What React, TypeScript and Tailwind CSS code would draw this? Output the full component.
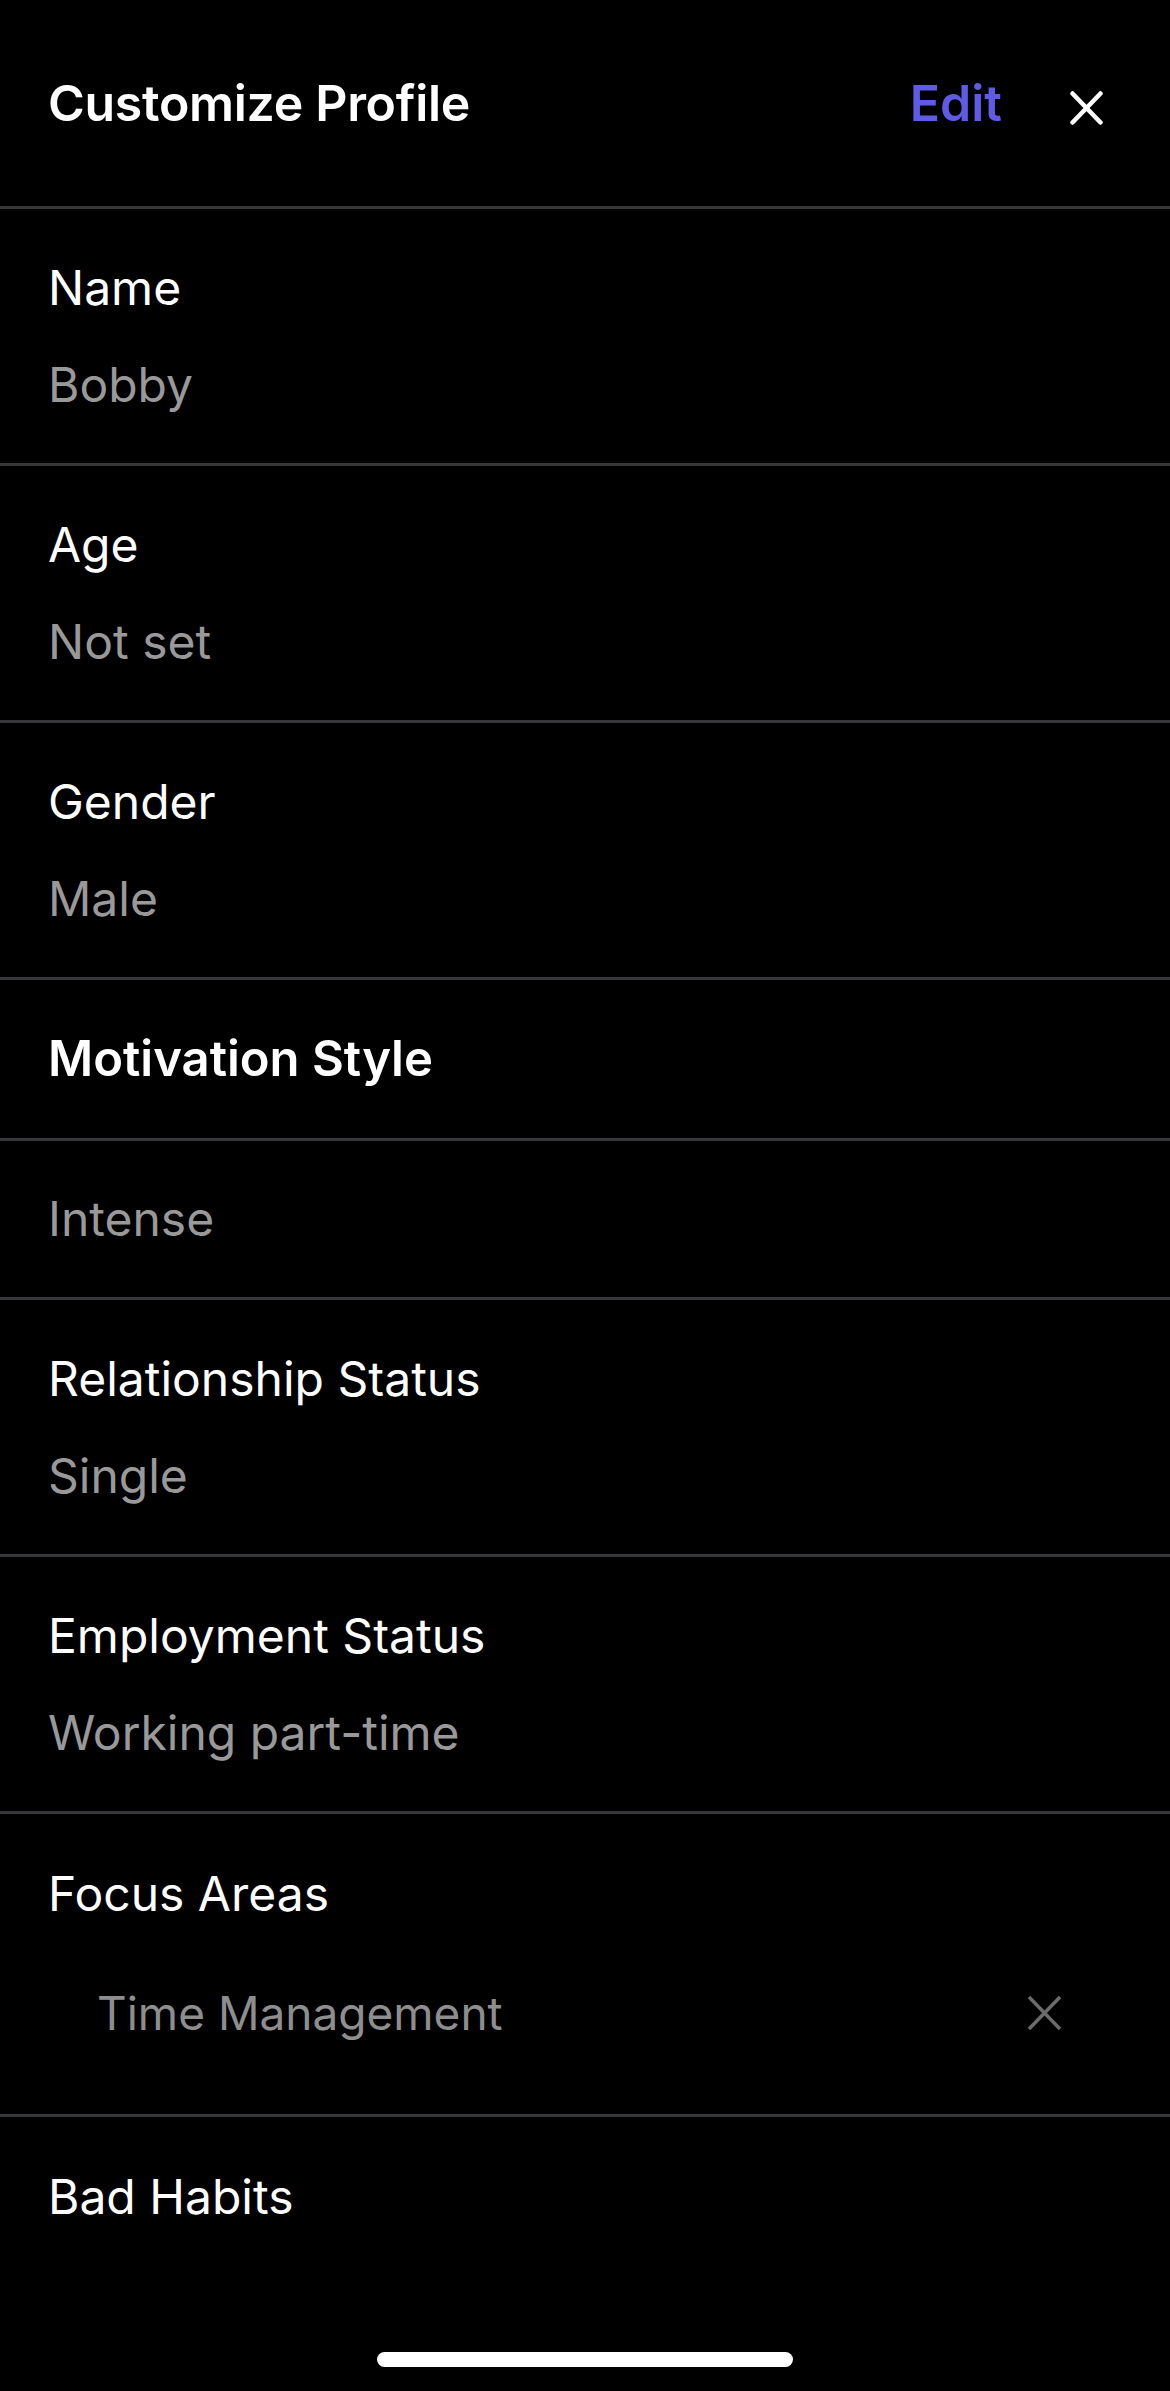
import React from "react";

const font = { fontFamily: "Inter, 'Noto Sans', 'Liberation Sans', sans-serif" };

function Divider() {
  return <div className="h-[3px] w-full bg-[#38383a]" />;
}

function Field({ label, value }: { label: string; value: string }) {
  return (
    <>
      <div className="flex flex-col pl-[48px] pr-[48px] pt-[50px] pb-[49px] gap-[39px]">
        <div className="text-[48px] leading-[58px] text-white">{label}</div>
        <div className="text-[48px] leading-[58px] text-[#999999]">{value}</div>
      </div>
      <Divider />
    </>
  );
}

export default function App() {
  return (
    <div
      className="relative min-h-[2391px] w-full overflow-hidden bg-black antialiased"
      style={font}
    >
      {/* Header */}
      <div className="flex h-[206px] items-center justify-between pl-[48px] pr-[67px]">
        <div className="text-[50px] font-semibold leading-[60px] tracking-[-0.3px] text-white">
          Customize Profile
        </div>
        <div className="flex items-center gap-[68px]">
          <span className="text-[50px] font-semibold leading-[60px] text-[#5e5ce6]">Edit</span>
          <svg width="33" height="34" viewBox="0 0 33 34" className="mt-[10px]">
            <path d="M2.5 2.5 L30.5 31.5 M30.5 2.5 L2.5 31.5" stroke="#ffffff" strokeWidth="4.5" strokeLinecap="round" fill="none" />
          </svg>
        </div>
      </div>
      <Divider />

      <Field label="Name" value="Bobby" />
      <Field label="Age" value="Not set" />
      <Field label="Gender" value="Male" />

      <div className="pl-[48px] pt-[50px] pb-[50px]">
        <div className="text-[49px] font-semibold leading-[58px] text-white">Motivation Style</div>
      </div>
      <Divider />
      <div className="pl-[48px] pt-[49px] pb-[49px]">
        <div className="text-[48px] leading-[58px] text-[#999999]">Intense</div>
      </div>
      <Divider />

      <Field label="Relationship Status" value="Single" />
      <Field label="Employment Status" value="Working part-time" />

      <div className="flex flex-col pt-[51px] pb-[72px]">
        <div className="pl-[48px] text-[48px] leading-[58px] text-white">Focus Areas</div>
        <div className="mt-[61px] flex items-center justify-between pl-[97px] pr-[108px]">
          <span className="text-[46px] leading-[58px] text-[#8e8e8e]">Time Management</span>
          <svg width="35" height="36" viewBox="0 0 35 36">
            <path d="M2 2 L33 34 M33 2 L2 34" stroke="#6b6b6b" strokeWidth="3.5" strokeLinecap="butt" fill="none" />
          </svg>
        </div>
      </div>
      <Divider />

      <div className="pl-[48px] pt-[51px]">
        <div className="text-[48px] leading-[58px] text-white">Bad Habits</div>
      </div>

      {/* Home indicator */}
      <div className="absolute bottom-[24px] left-1/2 h-[15px] w-[416px] -translate-x-1/2 rounded-full bg-white" />
    </div>
  );
}
